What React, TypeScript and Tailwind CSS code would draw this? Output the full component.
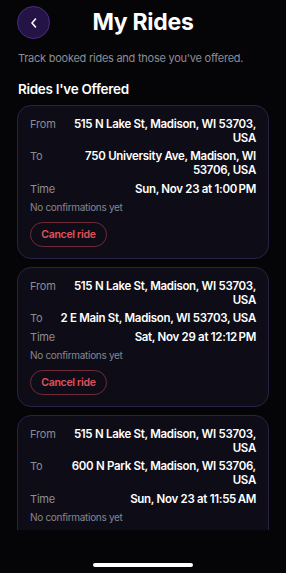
import React from "react";

type Ride = { from: string; to: string; time: string; cancel: boolean };

const rides: Ride[] = [
  { from: "515 N Lake St, Madison, WI 53703, USA", to: "750 University Ave, Madison, WI 53706, USA", time: "Sun, Nov 23 at 1:00\u202FPM", cancel: true },
  { from: "515 N Lake St, Madison, WI 53703, USA", to: "2 E Main St, Madison, WI 53703, USA", time: "Sat, Nov 29 at 12:12\u202FPM", cancel: true },
  { from: "515 N Lake St, Madison, WI 53703, USA", to: "600 N Park St, Madison, WI 53706, USA", time: "Sun, Nov 23 at 11:55\u202FAM", cancel: true },
];

function Row({ label, value }: { label: string; value: string }) {
  return (
    <div className="flex items-start justify-between">
      <span className="shrink-0 text-[11px] leading-[14px] tracking-[-0.2px] text-[#8b8b94]">{label}</span>
      <span className="w-[198px] text-right text-[11.5px] font-semibold leading-[14px] tracking-[-0.3px] text-white">{value}</span>
    </div>
  );
}

function Card({ ride }: { ride: Ride }) {
  return (
    <div className="shrink-0 rounded-[14px] border border-[#2a2148] bg-[#0e0d17] px-[12px] pt-[10.5px] pb-[11px]">
      <div className="flex flex-col gap-[4.5px]">
        <Row label="From" value={ride.from} />
        <Row label="To" value={ride.to} />
        <Row label="Time" value={ride.time} />
        <div className="text-[10px] leading-[14px] tracking-[-0.3px] text-[#86868f]">No confirmations yet</div>
      </div>
      {ride.cancel && (
        <button className="mt-[8px] h-[25px] w-[77px] rounded-full border border-[#6e2a36] text-[10.5px] font-semibold tracking-[-0.3px] text-[#e0525b]">
          Cancel ride
        </button>
      )}
    </div>
  );
}

export default function App() {
  return (
    <div className="flex h-[573px] w-[286px] flex-col overflow-hidden bg-[#050507]" style={{ fontFamily: "Inter, 'Noto Sans', sans-serif" }}>
      <div className="min-h-0 flex-1 overflow-hidden">
        <div className="flex items-center px-[17px] pt-[6px]">
          <div className="flex h-[33px] w-[33px] shrink-0 items-center justify-center rounded-full border border-[#4a2c88] bg-[#241446]">
            <svg width="10" height="12" viewBox="0 0 10 12" fill="none">
              <path d="M6.5 2 L3 6 L6.5 10" stroke="white" strokeWidth="1.6" strokeLinecap="round" strokeLinejoin="round" />
            </svg>
          </div>
          <div className="flex-1 text-center text-[23px] font-bold leading-[33px] tracking-[-0.3px] text-white">My Rides</div>
          <div className="w-[33px] shrink-0" />
        </div>
        <div className="px-[18px] pt-[11px] text-[11px] leading-[16px] tracking-[-0.25px] text-[#8d8d95]">Track booked rides and those you've offered.</div>
        <div className="px-[18px] pt-[14px] text-[13.5px] font-semibold leading-[18px] tracking-[-0.3px] text-white">Rides I've Offered</div>
        <div className="flex flex-col gap-[8px] px-[17px] pt-[7px]">
          {rides.map((r, i) => (
            <Card key={i} ride={r} />
          ))}
        </div>
      </div>
      <div className="flex h-[43px] shrink-0 justify-center bg-[#050507]">
        <div className="mt-[33px] h-[4px] w-[100px] rounded-full bg-white" />
      </div>
    </div>
  );
}
